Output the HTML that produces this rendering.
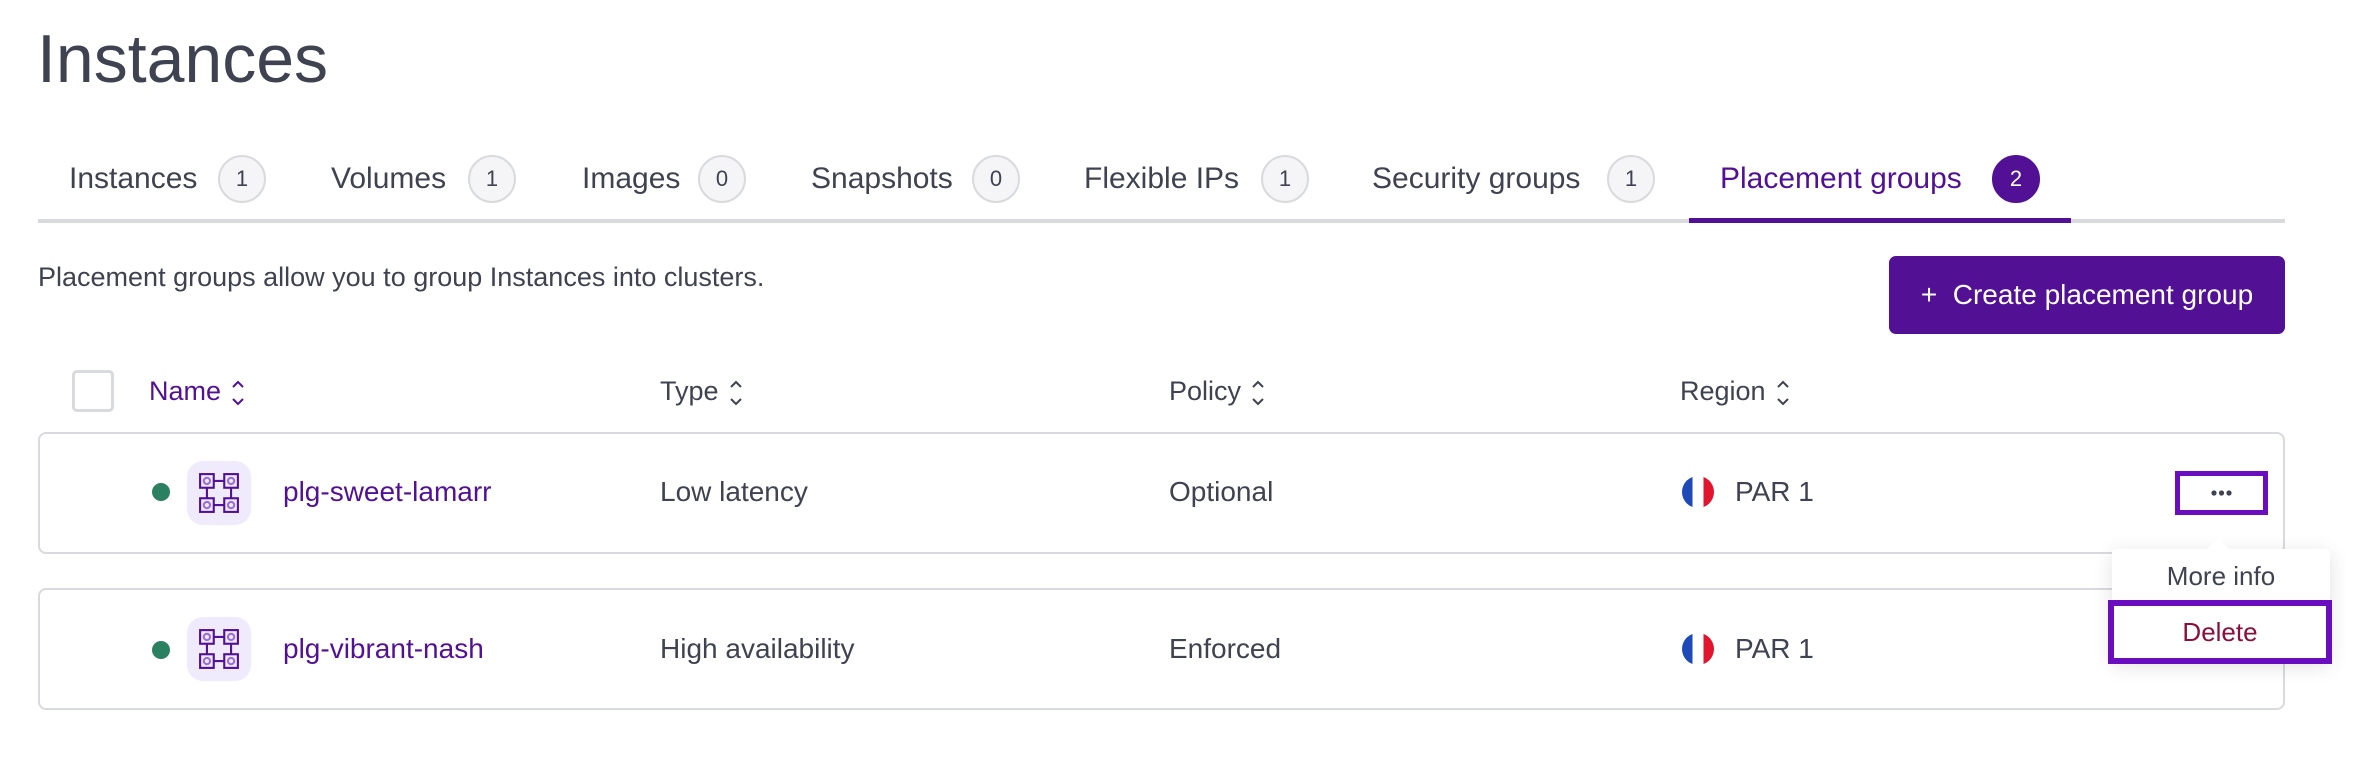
<!DOCTYPE html>
<html><head><meta charset="utf-8"><style>
*{margin:0;padding:0;box-sizing:border-box}
body{width:2359px;height:760px;background:#fff;font-family:"Liberation Sans",sans-serif;color:#3f4250;position:relative;overflow:hidden}
.a{position:absolute;white-space:nowrap}
.tab{position:absolute;top:159px;font-size:30px;line-height:40px;color:#3f4250}
.bd{position:absolute;top:155px;width:48px;height:48px;border-radius:50%;border:2px solid #d9dadd;background:#f5f5f7;font-size:22px;line-height:44px;text-align:center;color:#3f4250}
.hd{position:absolute;top:373px;font-size:27px;line-height:36px}
.hd svg{vertical-align:middle;margin-left:10px}
.row{position:absolute;left:38px;width:2247px;border:2px solid #d9dadd;border-radius:8px;height:122px;background:#fff}
.cell{position:absolute;font-size:28px;line-height:36px}
.dot{position:absolute;width:18px;height:18px;border-radius:50%;background:#2b8061}
.ic{position:absolute;width:64px;height:64px;border-radius:16px;background:#f0ebfc}
.flag{position:absolute;width:32px;height:32px;border-radius:50%;overflow:hidden;background:linear-gradient(90deg,#1d4ab8 0 33%,#fff 33% 67%,#e1162e 67%)}
</style></head><body>
<div class="a" style="left:37px;top:14px;font-size:68px;line-height:90px;color:#3f4250">Instances</div>

<div class="tab" style="left:69px">Instances</div><div class="bd" style="left:218px">1</div>
<div class="tab" style="left:331px">Volumes</div><div class="bd" style="left:468px">1</div>
<div class="tab" style="left:582px">Images</div><div class="bd" style="left:698px">0</div>
<div class="tab" style="left:811px">Snapshots</div><div class="bd" style="left:972px">0</div>
<div class="tab" style="left:1084px">Flexible IPs</div><div class="bd" style="left:1261px">1</div>
<div class="tab" style="left:1372px">Security groups</div><div class="bd" style="left:1607px">1</div>
<div class="tab" style="left:1720px;color:#521094">Placement groups</div><div class="bd" style="left:1992px;background:#521094;border-color:#521094;color:#fff">2</div>
<div class="a" style="left:38px;top:219px;width:2247px;height:4px;background:#d9dadd"></div>
<div class="a" style="left:1689px;top:218px;width:382px;height:5px;background:#521094"></div>

<div class="a" style="left:38px;top:261px;font-size:27px;line-height:32px">Placement groups allow you to group Instances into clusters.</div>
<div class="a" style="left:1889px;top:256px;width:396px;height:78px;border-radius:7px;background:#521094;color:#fff;font-size:28px;line-height:78px;text-align:center">+&nbsp;&nbsp;Create placement group</div>

<svg width="0" height="0" style="position:absolute"><defs>
<symbol id="so" viewBox="0 0 14 28"><path d="M2 8l5-5 5 5M2 20l5 5 5-5" fill="none" stroke="currentColor" stroke-width="2"/></symbol>
<symbol id="pg" viewBox="0 0 40 40"><g fill="none" stroke="#521094" stroke-width="2"><rect x="2" y="2" width="13" height="13"/><rect x="25" y="2" width="13" height="13"/><rect x="2" y="25" width="13" height="13"/><rect x="25" y="25" width="13" height="13"/><path d="M15 8.5h10M15 31.5h10M8.5 15v10M31.5 15v10"/></g><g fill="none" stroke="#9b6ee0" stroke-width="2"><circle cx="8.5" cy="8.5" r="3"/><circle cx="31.5" cy="8.5" r="3"/><circle cx="8.5" cy="31.5" r="3"/><circle cx="31.5" cy="31.5" r="3"/></g></symbol></defs></svg>

<div class="a" style="left:72px;top:370px;width:42px;height:42px;border:3px solid #d9dadd;border-radius:5px"></div>
<div class="hd" style="left:149px;color:#521094">Name<svg width="14" height="28"><use href="#so"/></svg></div>
<div class="hd" style="left:660px">Type<svg width="14" height="28"><use href="#so"/></svg></div>
<div class="hd" style="left:1169px">Policy<svg width="14" height="28"><use href="#so"/></svg></div>
<div class="hd" style="left:1680px">Region<svg width="14" height="28"><use href="#so"/></svg></div>

<div class="row" style="top:432px"></div>
<div class="dot" style="left:152px;top:483px"></div>
<div class="ic" style="left:187px;top:461px"><svg style="position:absolute;left:11px;top:11px" width="42" height="42"><use href="#pg"/></svg></div>
<div class="cell" style="left:283px;top:474px;color:#521094">plg-sweet-lamarr</div>
<div class="cell" style="left:660px;top:474px">Low latency</div>
<div class="cell" style="left:1169px;top:474px">Optional</div>
<div class="flag" style="left:1682px;top:476px"></div>
<div class="cell" style="left:1735px;top:474px">PAR 1</div>

<div class="row" style="top:588px"></div>
<div class="dot" style="left:152px;top:641px"></div>
<div class="ic" style="left:187px;top:617px"><svg style="position:absolute;left:11px;top:11px" width="42" height="42"><use href="#pg"/></svg></div>
<div class="cell" style="left:283px;top:631px;color:#521094">plg-vibrant-nash</div>
<div class="cell" style="left:660px;top:631px">High availability</div>
<div class="cell" style="left:1169px;top:631px">Enforced</div>
<div class="flag" style="left:1682px;top:633px"></div>
<div class="cell" style="left:1735px;top:631px">PAR 1</div>

<div class="a" style="left:2175px;top:471px;width:93px;height:44px;border:5px solid #6a0dbf;background:#fff">
<svg width="83" height="34" style="position:absolute;left:0;top:0"><g fill="#3f4250"><circle cx="34" cy="17" r="2.6"/><circle cx="41.5" cy="17" r="2.6"/><circle cx="49" cy="17" r="2.6"/></g></svg></div>

<div class="a" style="left:2112px;top:549px;width:218px;height:113px;background:#fff;box-shadow:0 4px 20px rgba(0,0,0,.12);border-radius:4px"></div>
<div class="a" style="left:2206px;top:538px;width:0;height:0;border-left:12px solid transparent;border-right:12px solid transparent;border-bottom:12px solid #fff"></div>
<div class="a" style="left:2112px;top:558px;width:218px;text-align:center;font-size:26px;line-height:36px;color:#3f4250">More info</div>
<div class="a" style="left:2108px;top:600px;width:224px;height:64px;border:6px solid #6a0dbf;text-align:center;font-size:26px;line-height:52px;color:#8b0e3d;background:#fff">Delete</div>
</body></html>
